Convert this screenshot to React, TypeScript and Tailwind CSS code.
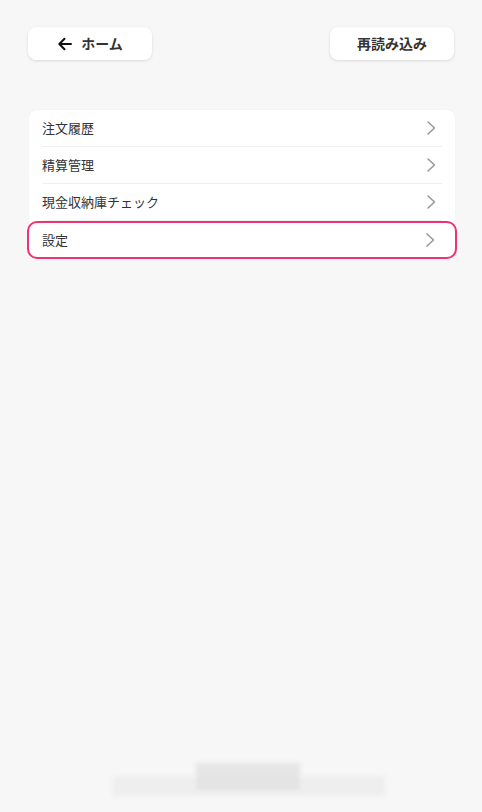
import React from "react";

const items = ["注文履歴", "精算管理", "現金収納庫チェック"];

function Chevron() {
  return (
    <svg width="12" height="16" viewBox="0 0 12 16" fill="none" className="shrink-0">
      <path d="M3 2 L9.5 8 L3 14" stroke="#999999" strokeWidth="1.6" strokeLinecap="round" strokeLinejoin="round" />
    </svg>
  );
}

export default function App() {
  return (
    <div
      className="w-[482px] h-[812px] bg-[#f7f7f7] flex flex-col overflow-hidden"
      style={{ fontFamily: '"Noto Sans CJK JP", "Noto Sans", sans-serif' }}
    >
      <div className="flex justify-between px-[28px] pt-[27px]">
        <button className="w-[124px] h-[33px] bg-white rounded-[8px] shadow-[0_1px_3px_rgba(0,0,0,0.12)] flex items-center justify-center gap-[8px] text-[14px] font-bold text-[#333]">
          <svg width="16" height="16" viewBox="0 0 16 16" fill="none">
            <path d="M14 8 H2.5 M7.5 2.8 L2.3 8 L7.5 13.2" stroke="#111" strokeWidth="2" strokeLinecap="round" strokeLinejoin="round" />
          </svg>
          <span>ホーム</span>
        </button>
        <button className="w-[124px] h-[33px] bg-white rounded-[8px] shadow-[0_1px_3px_rgba(0,0,0,0.12)] flex items-center justify-center text-[14px] font-bold text-[#333]">
          再読み込み
        </button>
      </div>

      <div className="ml-[29px] mr-[27px] mt-[50px] bg-white rounded-[8px] shadow-[0_0_1px_rgba(0,0,0,0.08)] flex flex-col">
        {items.map((t) => (
          <div key={t} className="mx-[13px] h-[37px] flex items-center justify-between border-b border-[#f0f0f0] pr-[5px]">
            <span className="text-[13px] text-[#333]">{t}</span>
            <Chevron />
          </div>
        ))}
        <div className="-mx-[2px] h-[38px] border-2 border-[#f0336f] rounded-[10px] flex items-center justify-between pl-[13px] pr-[19px]">
          <span className="text-[13px] text-[#333]">設定</span>
          <Chevron />
        </div>
      </div>

      <div className="flex-1" />

      <div className="relative h-[60px] mb-[2px] blur-[2px]">
        <div className="absolute left-[196px] top-[13px] w-[104px] h-[24px] bg-[#e6e6e6]" />
        <div className="absolute left-[113px] top-[26px] w-[272px] h-[20px] bg-[#eeeeee]" />
        <div className="absolute left-[196px] top-[26px] w-[104px] h-[14px] bg-[#e4e4e4]" />
      </div>
    </div>
  );
}
